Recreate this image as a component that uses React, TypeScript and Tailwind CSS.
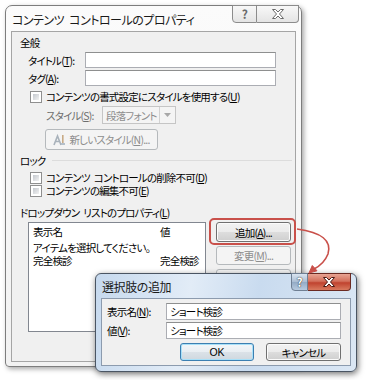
import React from "react";

function Sp({ w = "w-[4px]" }: { w?: string }) {
  return <span className={"inline-block " + w} />;
}

function Chk({ children }: { children: React.ReactNode }) {
  return (
    <div className="flex items-center h-[13px] ml-[10px] leading-[12px]">
      <div className="w-[12px] h-[12px] border border-[#8f8f8f] bg-white p-[2px]">
        <div className="w-full h-full bg-gradient-to-br from-[#c4c8ce] to-[#f2f2f2]" />
      </div>
      <span className="ml-[4px] whitespace-nowrap">{children}</span>
    </div>
  );
}

function Btn({
  children,
  disabled,
  focus,
  className,
}: {
  children: React.ReactNode;
  disabled?: boolean;
  focus?: boolean;
  className?: string;
}) {
  if (disabled) {
    return (
      <div
        className={
          "flex items-center justify-center rounded-[3px] border border-[#b5b9bc] bg-[#f4f4f4] text-[#8d8d8d] whitespace-nowrap " +
          (className ?? "")
        }
      >
        {children}
      </div>
    );
  }
  return (
    <div
      className={
        "flex items-center justify-center rounded-[3px] border whitespace-nowrap " +
        (focus
          ? "border-[#3c7fb1] shadow-[inset_0_0_0_1px_#a8e0f8] bg-[linear-gradient(#f2f6f9_0%,#e9eef2_50%,#dbe2e8_51%,#cfd8df_100%)] "
          : "border-[#707070] shadow-[inset_0_0_0_1px_#fbfbfb] bg-[linear-gradient(#f2f2f2_0%,#ebebeb_50%,#dddddd_51%,#cfcfcf_100%)] ") +
        (className ?? "")
      }
    >
      {children}
    </div>
  );
}

function Input({ className, children }: { className?: string; children?: React.ReactNode }) {
  return (
    <div
      className={
        "flex items-center bg-white border border-[#abadb3] border-t-[#8e8f8f] pl-[3px] whitespace-nowrap " +
        (className ?? "")
      }
    >
      {children}
    </div>
  );
}

export default function App() {
  return (
    <div className="relative w-[368px] h-[380px] overflow-hidden bg-white text-[10.5px] leading-[13px] tracking-[-0.8px] text-black font-['Noto_Sans_CJK_JP','Noto_Sans',sans-serif] [font-feature-settings:'palt']">
      {/* Main window */}
      <div className="absolute left-[5px] top-[5px] w-[297px] h-[362px] flex flex-col rounded-t-[7px] rounded-b-[4px] border border-[#7d7d7d] bg-[linear-gradient(#fbfbfb,#f2f2f2)] shadow-[2px_2px_5px_rgba(0,0,0,0.35)]">
        <div className="relative h-[25px] flex items-center pl-[6px] pt-[2px] text-[12px] tracking-[-0.5px] text-[#1a1a1a]">
          <span className="whitespace-nowrap">
            コンテンツ<Sp w="w-[5px]" />コントロールのプロパティ
          </span>
          <div className="absolute right-[2px] top-[-1px] flex h-[18px]">
            <div className="w-[25px] h-full flex items-center justify-center border border-[#8c8c8c] rounded-bl-[4px] bg-[linear-gradient(#f8f8f8,#e4e4e4)] text-[12px] font-bold text-[#6a6a6a] leading-none">
              ?
            </div>
            <div className="w-[42px] h-full flex items-center justify-center border border-l-0 border-[#8c8c8c] rounded-br-[4px] bg-[linear-gradient(#f8f8f8,#e4e4e4)]">
              <svg width="12" height="10" viewBox="0 0 12 10">
                <polygon
                  points="0.5,0.5 3.5,0.5 6,3 8.5,0.5 11.5,0.5 7.5,5 11.5,9.5 8.5,9.5 6,7 3.5,9.5 0.5,9.5 4.5,5"
                  fill="#ffffff"
                  stroke="#6a6a6a"
                  strokeWidth="1"
                />
              </svg>
            </div>
          </div>
        </div>
        <div className="flex-1 mx-[5px] mb-[4px] border border-[#a5a5a5] bg-[#f0f0f0] flex flex-col pl-[8px] pt-[3px]">
          <div className="h-[14px] flex items-center">全般</div>
          <div className="mt-[3px] h-[16px] flex items-center ml-[8px]">
            <span className="w-[57px] whitespace-nowrap">
              タイトル(<u className="underline-offset-1">T</u>):
            </span>
            <Input className="w-[191px] h-[16px]" />
          </div>
          <div className="mt-[2px] h-[16px] flex items-center ml-[8px]">
            <span className="w-[57px] whitespace-nowrap">
              タグ(<u className="underline-offset-1">A</u>):
            </span>
            <Input className="w-[191px] h-[16px]" />
          </div>
          <div className="mt-[4px]">
            <Chk>
              コンテンツの書式設定にスタイルを使用する(<u className="underline-offset-1">U</u>)
            </Chk>
          </div>
          <div className="mt-[3px] h-[18px] flex items-center ml-[26px] text-[#6d6d6d]">
            <span className="w-[56px] whitespace-nowrap">
              スタイル(<u className="underline-offset-1">S</u>):
            </span>
            <div className="flex h-[18px] border border-[#c5c5c5] bg-[#f4f4f4]">
              <div className="w-[56px] flex items-center pl-[3px] text-[#8d8d8d] whitespace-nowrap">段落フォント</div>
              <div className="w-[16px] border-l border-[#d2d2d2] flex items-center justify-center">
                <svg width="7" height="4" viewBox="0 0 7 4">
                  <polygon points="0,0 7,0 3.5,4" fill="#a8a8a8" />
                </svg>
              </div>
            </div>
          </div>
          <div className="mt-[5px] ml-[25px]">
            <Btn disabled className="w-[113px] h-[21px] gap-[3px]">
              <svg width="13" height="12" viewBox="0 0 13 12">
                <path d="M1 11 L4.5 2 L8 11 M2.4 7.5 L6.6 7.5" fill="none" stroke="#a9b2bb" strokeWidth="1.6" />
                <rect x="9" y="1" width="1.6" height="10" fill="#c9ab86" />
                <rect x="8" y="9" width="4" height="2" fill="#b5c0cb" />
              </svg>
              <span>
                新しいスタイル(<u className="underline-offset-1">N</u>)...
              </span>
            </Btn>
          </div>
          <div className="mt-[3px] h-[14px] flex items-center">
            <span>ロック</span>
            <div className="flex-1 h-px bg-[#dcdcdc] ml-[6px] mr-[3px]" />
          </div>
          <div className="mt-[4px]">
            <Chk>
              コンテンツ<Sp />コントロールの削除不可(<u className="underline-offset-1">D</u>)
            </Chk>
          </div>
          <div>
            <Chk>
              コンテンツの編集不可(<u className="underline-offset-1">E</u>)
            </Chk>
          </div>
          <div className="mt-[8px] h-[14px] flex items-center whitespace-nowrap">
            <span>
              ドロップダウン<Sp />リストのプロパティ(<u className="underline-offset-1">L</u>)
            </span>
          </div>
          <div className="mt-[3px] flex ml-[8px]">
            <div className="w-[178px] h-[110px] border border-[#828790] bg-white flex flex-col">
              <div className="h-[17px] flex items-center pl-[4px]">
                <span className="w-[127px]">表示名</span>
                <span>値</span>
              </div>
              <div className="leading-[12px] pl-[4px] pt-[1px]">
                <div className="h-[13px] flex items-center whitespace-nowrap">アイテムを選択してください。</div>
                <div className="h-[13px] flex items-center">
                  <span className="w-[127px]">完全検診</span>
                  <span className="whitespace-nowrap">完全検診</span>
                </div>
              </div>
            </div>
            <div className="ml-[10px] w-[75px] flex flex-col">
              <Btn className="h-[20px]">
                追加(<u className="underline-offset-1">A</u>)...
              </Btn>
              <Btn disabled className="h-[19px] mt-[4px]">
                変更(<u className="underline-offset-1">M</u>)...
              </Btn>
              <Btn disabled className="h-[19px] mt-[4px]">
                削除(<u className="underline-offset-1">R</u>)
              </Btn>
            </div>
          </div>
        </div>
      </div>

      {/* red highlight around 追加 */}
      <div className="absolute left-[209px] top-[218px] w-[87px] h-[27px] border-2 border-[#c9504a] rounded-[5px]" />

      {/* Second dialog */}
      <div className="absolute left-[95px] top-[273px] w-[262px] h-[99px] flex flex-col rounded-[6px] border border-[#4a5563] bg-[linear-gradient(100deg,#c6d9ee_0%,#e2ecf7_35%,#c9dbef_60%,#dbe7f4_100%)] shadow-[1px_2px_6px_rgba(0,0,0,0.55)]">
        <div className="relative h-[24px] flex items-center pl-[6px] pt-[1px] text-[12px] tracking-[-0.4px] text-[#1a1a1a]">
          <span className="whitespace-nowrap">選択肢の追加</span>
          <div className="absolute right-[5px] top-[-1px] flex h-[18px]">
            <div className="w-[17px] h-full flex items-center justify-center border border-[#6f7f93] rounded-bl-[4px] bg-[linear-gradient(#d9e4f0,#a9bcd2_50%,#93aac4_51%,#b8cbe0)] text-[12px] font-bold text-white leading-none [text-shadow:0_0_1px_#333,0_0_1px_#333]">
              ?
            </div>
            <div className="w-[43px] h-full flex items-center justify-center border border-l-0 border-[#6b2a22] rounded-br-[4px] bg-[linear-gradient(#e8a493,#d3705c_45%,#c0432f_55%,#d97a5f)]">
              <svg width="12" height="10" viewBox="0 0 12 10">
                <polygon
                  points="0.5,0.5 3.5,0.5 6,3 8.5,0.5 11.5,0.5 7.5,5 11.5,9.5 8.5,9.5 6,7 3.5,9.5 0.5,9.5 4.5,5"
                  fill="#ffffff"
                  stroke="#4a1a14"
                  strokeWidth="1"
                />
              </svg>
            </div>
          </div>
        </div>
        <div className="flex-1 mx-[5px] mb-[5px] border border-[#8c9bae] bg-[#f0f0f0] flex flex-col">
          <div className="mt-[4px] h-[17px] flex items-center pl-[5px]">
            <span className="w-[59px] whitespace-nowrap">
              表示名(<u className="underline-offset-1">N</u>):
            </span>
            <Input className="w-[175px] h-[17px]">ショート検診</Input>
          </div>
          <div className="mt-[2px] h-[17px] flex items-center pl-[5px]">
            <span className="w-[59px] whitespace-nowrap">
              値(<u className="underline-offset-1">V</u>):
            </span>
            <Input className="w-[175px] h-[17px]">ショート検診</Input>
          </div>
          <div className="mt-[4px] flex pl-[78px]">
            <Btn focus className="w-[74px] h-[18px] tracking-normal font-['Liberation_Sans',sans-serif]">
              OK
            </Btn>
            <Btn className="w-[75px] h-[18px] ml-[12px]">キャンセル</Btn>
          </div>
        </div>
      </div>

      {/* red arrow */}
      <svg className="absolute left-0 top-0 pointer-events-none" width="368" height="380" viewBox="0 0 368 380">
        <path d="M297 229 Q334 234 328 254 Q324 264 314 269" fill="none" stroke="#c9504a" strokeWidth="1.6" />
        <polygon points="309,273 312.3,265.5 317,270.8" fill="#c9504a" stroke="#c9504a" strokeWidth="1" />
      </svg>
    </div>
  );
}
